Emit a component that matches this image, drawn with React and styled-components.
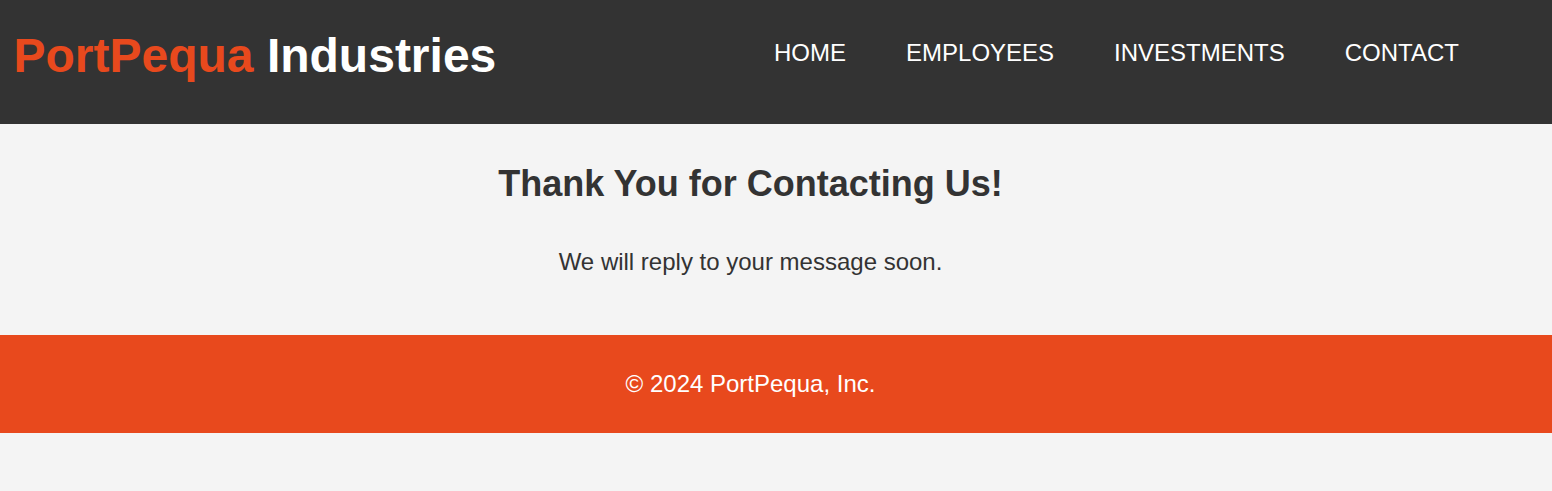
import React from "react";
import styled, { createGlobalStyle } from "styled-components";

const GlobalStyle = createGlobalStyle`
  html, body {
    margin: 0;
    padding: 0;
    background: #f4f4f4;
    font-family: "Liberation Sans", Arial, sans-serif;
    color: #333333;
  }
`;

const Header = styled.header`
  display: flex;
  justify-content: space-between;
  align-items: flex-start;
  height: 124px;
  box-sizing: border-box;
  padding: 0 93px 0 13.5px;
  background: #333333;
`;

const Logo = styled.h1`
  margin: 27.6px 0 0;
  font-size: 48px;
  font-weight: 700;
  line-height: normal;
  color: #ffffff;
`;

const Accent = styled.span`
  color: #e8491d;
`;

const Nav = styled.nav`
  display: flex;
  gap: 60px;
  margin-top: 39.3px;
`;

const NavLink = styled.a`
  font-size: 24px;
  line-height: normal;
  color: #ffffff;
  text-decoration: none;
  text-transform: uppercase;
`;

const Main = styled.main`
  display: flex;
  flex-direction: column;
  align-items: center;
  padding: 39.4px 51px 59px 0;
  text-align: center;
`;

const Title = styled.h2`
  margin: 0;
  font-size: 36px;
  font-weight: 700;
  line-height: normal;
  color: #333333;
`;

const Message = styled.p`
  margin: 42.5px 0 0;
  font-size: 24px;
  line-height: normal;
  color: #333333;
`;

const Footer = styled.footer`
  display: flex;
  align-items: center;
  justify-content: center;
  height: 98px;
  box-sizing: border-box;
  padding-right: 51px;
  background: #e8491d;
  color: #ffffff;
  font-size: 24px;
  line-height: normal;
`;

const links = ["Home", "Employees", "Investments", "Contact"];

export default function App() {
  return (
    <>
      <GlobalStyle />
      <Header>
        <Logo>
          <Accent>PortPequa</Accent> Industries
        </Logo>
        <Nav>
          {links.map((l) => (
            <NavLink key={l} href="#">
              {l}
            </NavLink>
          ))}
        </Nav>
      </Header>
      <Main>
        <Title>Thank You for Contacting Us!</Title>
        <Message>We will reply to your message soon.</Message>
      </Main>
      <Footer>© 2024 PortPequa, Inc.</Footer>
    </>
  );
}
